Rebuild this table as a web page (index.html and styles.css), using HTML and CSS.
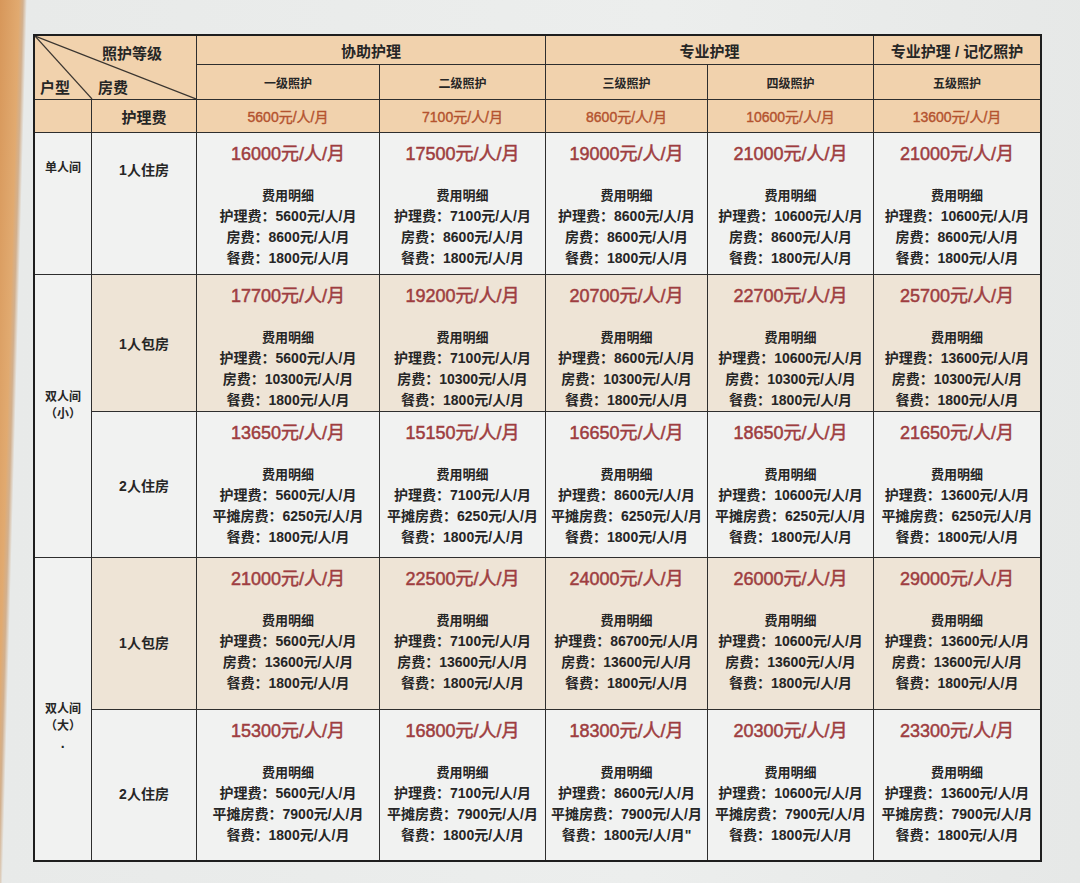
FILE: index.html
```html
<!DOCTYPE html>
<html lang="zh-CN">
<head>
<meta charset="utf-8">
<title>收费标准</title>
<link rel="stylesheet" href="styles.css">
</head>
<body>
<div class="sheet">
  <div class="table">
    <div class="cell head diag">
      <svg class="diag-lines" viewBox="0 0 161 63" preserveAspectRatio="none" aria-hidden="true">
        <line x1="0" y1="0" x2="57" y2="63" />
        <line x1="0" y1="0" x2="161" y2="63" />
      </svg>
      <div class="diag-type">户型</div>
      <div class="diag-right">
        <div class="diag-level">照护等级</div>
        <div class="diag-fee">房费</div>
      </div>
    </div>
    <div class="cell head group span2">协助护理</div>
    <div class="cell head group span2">专业护理</div>
    <div class="cell head group">专业护理 / 记忆照护</div>

    <div class="cell head level">一级照护</div>
    <div class="cell head level">二级照护</div>
    <div class="cell head level">三级照护</div>
    <div class="cell head level">四级照护</div>
    <div class="cell head level">五级照护</div>

    <div class="cell head"></div>
    <div class="cell head fee-label">护理费</div>
    <div class="cell head fee">5600元/人/月</div>
    <div class="cell head fee">7100元/人/月</div>
    <div class="cell head fee">8600元/人/月</div>
    <div class="cell head fee">10600元/人/月</div>
    <div class="cell head fee">13600元/人/月</div>

    <!-- 单人间 -->
    <div class="cell type type-single">单人间</div>
    <div class="cell room room-high">1人住房</div>
    <div class="cell data"><div class="price">16000元/人/月</div><div class="detail"><div class="dt">费用明细</div><div>护理费：5600元/人/月</div><div>房费：8600元/人/月</div><div>餐费：1800元/人/月</div></div></div>
    <div class="cell data"><div class="price">17500元/人/月</div><div class="detail"><div class="dt">费用明细</div><div>护理费：7100元/人/月</div><div>房费：8600元/人/月</div><div>餐费：1800元/人/月</div></div></div>
    <div class="cell data"><div class="price">19000元/人/月</div><div class="detail"><div class="dt">费用明细</div><div>护理费：8600元/人/月</div><div>房费：8600元/人/月</div><div>餐费：1800元/人/月</div></div></div>
    <div class="cell data"><div class="price">21000元/人/月</div><div class="detail"><div class="dt">费用明细</div><div>护理费：10600元/人/月</div><div>房费：8600元/人/月</div><div>餐费：1800元/人/月</div></div></div>
    <div class="cell data"><div class="price">21000元/人/月</div><div class="detail"><div class="dt">费用明细</div><div>护理费：10600元/人/月</div><div>房费：8600元/人/月</div><div>餐费：1800元/人/月</div></div></div>

    <!-- 双人间（小） -->
    <div class="cell type span-rows type-small">双人间<br>（小）</div>
    <div class="cell room beige">1人包房</div>
    <div class="cell data beige"><div class="price">17700元/人/月</div><div class="detail"><div class="dt">费用明细</div><div>护理费：5600元/人/月</div><div>房费：10300元/人/月</div><div>餐费：1800元/人/月</div></div></div>
    <div class="cell data beige"><div class="price">19200元/人/月</div><div class="detail"><div class="dt">费用明细</div><div>护理费：7100元/人/月</div><div>房费：10300元/人/月</div><div>餐费：1800元/人/月</div></div></div>
    <div class="cell data beige"><div class="price">20700元/人/月</div><div class="detail"><div class="dt">费用明细</div><div>护理费：8600元/人/月</div><div>房费：10300元/人/月</div><div>餐费：1800元/人/月</div></div></div>
    <div class="cell data beige"><div class="price">22700元/人/月</div><div class="detail"><div class="dt">费用明细</div><div>护理费：10600元/人/月</div><div>房费：10300元/人/月</div><div>餐费：1800元/人/月</div></div></div>
    <div class="cell data beige"><div class="price">25700元/人/月</div><div class="detail"><div class="dt">费用明细</div><div>护理费：13600元/人/月</div><div>房费：10300元/人/月</div><div>餐费：1800元/人/月</div></div></div>

    <div class="cell room">2人住房</div>
    <div class="cell data"><div class="price">13650元/人/月</div><div class="detail"><div class="dt">费用明细</div><div>护理费：5600元/人/月</div><div>平摊房费：6250元/人/月</div><div>餐费：1800元/人/月</div></div></div>
    <div class="cell data"><div class="price">15150元/人/月</div><div class="detail"><div class="dt">费用明细</div><div>护理费：7100元/人/月</div><div>平摊房费：6250元/人/月</div><div>餐费：1800元/人/月</div></div></div>
    <div class="cell data"><div class="price">16650元/人/月</div><div class="detail"><div class="dt">费用明细</div><div>护理费：8600元/人/月</div><div>平摊房费：6250元/人/月</div><div>餐费：1800元/人/月</div></div></div>
    <div class="cell data"><div class="price">18650元/人/月</div><div class="detail"><div class="dt">费用明细</div><div>护理费：10600元/人/月</div><div>平摊房费：6250元/人/月</div><div>餐费：1800元/人/月</div></div></div>
    <div class="cell data"><div class="price">21650元/人/月</div><div class="detail"><div class="dt">费用明细</div><div>护理费：13600元/人/月</div><div>平摊房费：6250元/人/月</div><div>餐费：1800元/人/月</div></div></div>

    <!-- 双人间（大） -->
    <div class="cell type span-rows type-large">双人间<br>（大）<span class="dot">·</span></div>
    <div class="cell room room-low beige">1人包房</div>
    <div class="cell data beige"><div class="price">21000元/人/月</div><div class="detail"><div class="dt">费用明细</div><div>护理费：5600元/人/月</div><div>房费：13600元/人/月</div><div>餐费：1800元/人/月</div></div></div>
    <div class="cell data beige"><div class="price">22500元/人/月</div><div class="detail"><div class="dt">费用明细</div><div>护理费：7100元/人/月</div><div>房费：13600元/人/月</div><div>餐费：1800元/人/月</div></div></div>
    <div class="cell data beige"><div class="price">24000元/人/月</div><div class="detail"><div class="dt">费用明细</div><div>护理费：86700元/人/月</div><div>房费：13600元/人/月</div><div>餐费：1800元/人/月</div></div></div>
    <div class="cell data beige"><div class="price">26000元/人/月</div><div class="detail"><div class="dt">费用明细</div><div>护理费：10600元/人/月</div><div>房费：13600元/人/月</div><div>餐费：1800元/人/月</div></div></div>
    <div class="cell data beige"><div class="price">29000元/人/月</div><div class="detail"><div class="dt">费用明细</div><div>护理费：13600元/人/月</div><div>房费：13600元/人/月</div><div>餐费：1800元/人/月</div></div></div>

    <div class="cell room room-low">2人住房</div>
    <div class="cell data"><div class="price">15300元/人/月</div><div class="detail"><div class="dt">费用明细</div><div>护理费：5600元/人/月</div><div>平摊房费：7900元/人/月</div><div>餐费：1800元/人/月</div></div></div>
    <div class="cell data"><div class="price">16800元/人/月</div><div class="detail"><div class="dt">费用明细</div><div>护理费：7100元/人/月</div><div>平摊房费：7900元/人/月</div><div>餐费：1800元/人/月</div></div></div>
    <div class="cell data"><div class="price">18300元/人/月</div><div class="detail"><div class="dt">费用明细</div><div>护理费：8600元/人/月</div><div>平摊房费：7900元/人/月</div><div>餐费：1800元/人/月"</div></div></div>
    <div class="cell data"><div class="price">20300元/人/月</div><div class="detail"><div class="dt">费用明细</div><div>护理费：10600元/人/月</div><div>平摊房费：7900元/人/月</div><div>餐费：1800元/人/月</div></div></div>
    <div class="cell data"><div class="price">23300元/人/月</div><div class="detail"><div class="dt">费用明细</div><div>护理费：13600元/人/月</div><div>平摊房费：7900元/人/月</div><div>餐费：1800元/人/月</div></div></div>
  </div>
</div>
</body>
</html>
```

FILE: styles.css
```css
html, body {
  margin: 0;
  height: 100%;
}

body {
  background: linear-gradient(91.6deg, #d7975a 0, #e1aa70 19px, #d2b08e 23px, #e8eae9 27px, #eceeed 60%, #e6e8e7 100%);
  font-family: "Liberation Sans", "Noto Sans CJK SC", sans-serif;
  color: #262626;
  overflow: hidden;
}

.sheet {
  padding: 34px 0 0 33px;
}

.table {
  display: grid;
  grid-template-columns: 56px 104px 182px 165px 161px 165px 166px;
  grid-template-rows: 28px 34px 32px 141px 136px 145px 151px 150px;
  gap: 1px;
  width: max-content;
  background: #2e2e2e;
  border: 2px solid #1e1e1e;
}

.cell {
  background: #f1f2f1;
  display: flex;
  align-items: center;
  justify-content: center;
  text-align: center;
  font-weight: bold;
  min-width: 0;
}

.head {
  background: #f1d2ad;
}

.beige {
  background: #eee4d6;
}

.span2 {
  grid-column: span 2;
}

.span-rows {
  grid-row: span 2;
}

/* diagonal header cell */
.diag {
  grid-column: span 2;
  grid-row: span 2;
  position: relative;
  display: grid;
  grid-template-columns: 57px 1fr;
  align-items: stretch;
  justify-content: stretch;
  font-size: 15px;
}

.diag-lines {
  position: absolute;
  inset: 0;
  width: 100%;
  height: 100%;
}

.diag-lines line {
  stroke: #3a3530;
  stroke-width: 1.2;
  vector-effect: non-scaling-stroke;
}

.diag-type {
  align-self: end;
  justify-self: start;
  margin: 0 0 2px 5px;
  line-height: 18px;
}

.diag-right {
  display: flex;
  flex-direction: column;
  justify-content: space-between;
  align-items: flex-start;
  padding: 9px 0 3px;
}

.diag-level {
  margin-left: 10px;
  line-height: 18px;
}

.diag-fee {
  margin-left: 6px;
  line-height: 16px;
}

.group {
  font-size: 15px;
}

.level {
  font-size: 12px;
}

.fee-label {
  font-size: 15px;
}

.fee {
  font-size: 14px;
  color: #b4532f;
  font-weight: normal;
  -webkit-text-stroke: 0.4px currentColor;
}

.type {
  font-size: 12px;
  line-height: 17px;
  flex-direction: column;
}

.type-single {
  padding-bottom: 70px;
}

.type-small {
  padding-bottom: 20px;
}

.type-large {
  padding-top: 40px;
}

.dot {
  display: block;
  line-height: 20px;
  font-size: 14px;
  margin-top: 2px;
}

.room {
  font-size: 14px;
}

.room-high {
  padding-bottom: 70px;
}

.room-low {
  padding-top: 16px;
}

.data {
  flex-direction: column;
  justify-content: flex-start;
  padding-top: 10px;
}

.price {
  font-size: 18px;
  line-height: 22px;
  color: #9e3d40;
  font-weight: normal;
  -webkit-text-stroke: 0.5px currentColor;
}

.detail {
  margin-top: 20px;
  font-size: 14px;
  line-height: 21px;
  white-space: nowrap;
}

.dt {
  font-size: 13px;
}
```
